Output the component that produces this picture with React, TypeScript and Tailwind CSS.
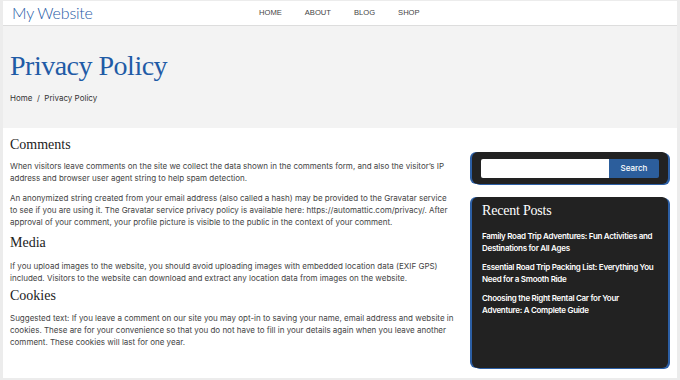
import React from "react";

const sans = { fontFamily: "Inter, 'Liberation Sans', sans-serif" };
const serif = { fontFamily: "'Liberation Serif', 'DejaVu Serif', serif" };

function Lines({ lines }: { lines: string[] }) {
  return (
    <>
      {lines.map((l, i) => (
        <span key={i} className="block whitespace-nowrap">
          {l}
        </span>
      ))}
    </>
  );
}

export default function App() {
  return (
    <div className="w-[680px] h-[380px] bg-[#ececec] pt-[1px] pl-[3px] pr-[3px] pb-[2px] overflow-hidden" style={sans}>
      <div className="w-full h-full bg-white flex flex-col">
        {/* header */}
        <div className="h-[25px] shrink-0 border-b border-[#dddddd] flex items-center pl-[9px]">
          <div className="text-[16px] leading-none text-[#1f5ba6] w-[247px] font-light tracking-[-0.2px]" style={{ fontFamily: "Lato, 'Open Sans', sans-serif" }}>
            My Website
          </div>
          <nav className="flex items-center gap-[23px] text-[7.6px] text-[#444] leading-none" style={{ fontFamily: "'Liberation Sans', sans-serif" }}>
            <span>HOME</span>
            <span>ABOUT</span>
            <span>BLOG</span>
            <span>SHOP</span>
          </nav>
        </div>
        {/* hero */}
        <div className="h-[102px] shrink-0 bg-[#f3f3f3] pl-[7px] pt-[22px]">
          <h1 className="text-[28px] leading-[36px] text-[#1f5ba6] tracking-[-0.5px]" style={serif}>
            Privacy Policy
          </h1>
          <div className="mt-[8px] text-[8px] leading-[12px] text-[#333]">Home&nbsp;&nbsp;/&nbsp;&nbsp;Privacy Policy</div>
        </div>
        {/* content */}
        <div className="flex flex-1 pl-[7px] pr-[9px]">
          <div className="w-[458px] text-[8px] leading-[12px] text-[#444]">
            <h2 className="mt-[9px] text-[14px] leading-[16px] text-[#222]" style={serif}>Comments</h2>
            <p className="mt-[7px]">
              <Lines
                lines={[
                  "When visitors leave comments on the site we collect the data shown in the comments form, and also the visitor’s IP",
                  "address and browser user agent string to help spam detection.",
                ]}
              />
            </p>
            <p className="mt-[8px]">
              <Lines
                lines={[
                  "An anonymized string created from your email address (also called a hash) may be provided to the Gravatar service",
                  "to see if you are using it. The Gravatar service privacy policy is available here: https://automattic.com/privacy/. After",
                  "approval of your comment, your profile picture is visible to the public in the context of your comment.",
                ]}
              />
            </p>
            <h2 className="mt-[7px] text-[14px] leading-[16px] text-[#222]" style={serif}>Media</h2>
            <p className="mt-[9px]">
              <Lines
                lines={[
                  "If you upload images to the website, you should avoid uploading images with embedded location data (EXIF GPS)",
                  "included. Visitors to the website can download and extract any location data from images on the website.",
                ]}
              />
            </p>
            <h2 className="mt-[4px] text-[14px] leading-[16px] text-[#222]" style={serif}>Cookies</h2>
            <p className="mt-[8px]">
              <Lines
                lines={[
                  "Suggested text: If you leave a comment on our site you may opt-in to saving your name, email address and website in",
                  "cookies. These are for your convenience so that you do not have to fill in your details again when you leave another",
                  "comment. These cookies will last for one year.",
                ]}
              />
            </p>
          </div>
          <aside className="ml-[4px] w-[196px] flex flex-col">
            <div className="mt-[24px] h-[32px] rounded-[6px] bg-[#222222] shadow-[-2px_0_0_0_#2c5fa5,2px_1px_0_0_#2c5fa5] flex items-center px-[9px]">
              <div className="flex-1 h-[19px] bg-white rounded-l-[2px]" />
              <div className="w-[50px] h-[19px] bg-[#2c5e9c] rounded-r-[2px] flex items-center justify-center text-white text-[8px] font-medium">
                Search
              </div>
            </div>
            <div className="mt-[13px] h-[171px] rounded-[6px] bg-[#222222] shadow-[-2px_0_0_0_#2c5fa5,2px_1px_0_0_#2c5fa5] pl-[10px] pr-[8px] pt-[5px] text-white">
              <h3 className="text-[14px] leading-[18px] tracking-[-0.2px]" style={serif}>Recent Posts</h3>
              <div className="mt-[10px] text-[8px] leading-[12px] font-semibold tracking-[-0.3px] flex flex-col gap-[7px]">
                <div>
                  <Lines lines={["Family Road Trip Adventures: Fun Activities and", "Destinations for All Ages"]} />
                </div>
                <div>
                  <Lines lines={["Essential Road Trip Packing List: Everything You", "Need for a Smooth Ride"]} />
                </div>
                <div>
                  <Lines lines={["Choosing the Right Rental Car for Your", "Adventure: A Complete Guide"]} />
                </div>
              </div>
            </div>
          </aside>
        </div>
      </div>
    </div>
  );
}
